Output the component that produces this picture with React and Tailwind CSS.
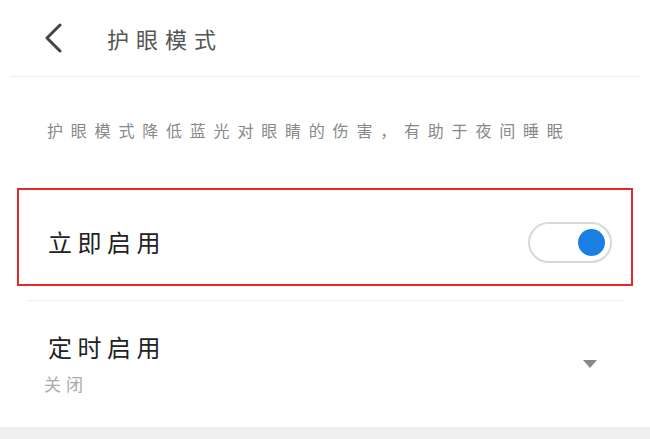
import React from "react";

export default function App() {
  const font = { fontFamily: '"Noto Sans CJK SC", "Noto Sans", sans-serif' };
  return (
    <div className="w-[650px] h-[439px] bg-white flex flex-col overflow-hidden" style={font}>
      {/* Header */}
      <div className="h-[76px] flex items-center pl-[43px]">
        <svg width="20" height="30" viewBox="0 0 20 30" className="shrink-0">
          <path d="M17 2 L4 15 L17 28" fill="none" stroke="#444" strokeWidth="3" strokeLinecap="round" strokeLinejoin="round" />
        </svg>
        <span className="ml-[44px] text-[22px] leading-none tracking-[7px] text-[#555]">护眼模式</span>
      </div>
      <div className="mx-[10px] h-px bg-[#ececec]" />

      {/* Description */}
      <div className="h-[111px] pl-[47px] pt-[43px]">
        <p className="text-[16px] leading-[20px] tracking-[7.8px] text-[#888] whitespace-nowrap">
          护眼模式降低蓝光对眼睛的伤害，有助于夜间睡眠
        </p>
      </div>

      {/* Highlighted row */}
      <div className="mx-[17px] h-[98px] border-2 border-[#e02a2a] flex items-center justify-between pl-[29px] pr-[19px] pt-[10px]">
        <span className="text-[24px] leading-none tracking-[5.5px] text-[#222]">立即启用</span>
        <div className="w-[84px] h-[41px] rounded-full border-2 border-[#d8d8d8] flex items-center justify-end pr-[5px]">
          <div className="w-[27px] h-[27px] rounded-full bg-[#1a7fe3]" />
        </div>
      </div>

      <div className="mt-[14px] mx-[27px] h-px bg-[#eeeeee]" />

      {/* Timed row */}
      <div className="h-[126px] flex items-start justify-between pl-[48px] pr-[52px] pt-[32px]">
        <div className="flex flex-col">
          <span className="text-[24px] leading-[28px] tracking-[5.5px] text-[#222]">定时启用</span>
          <span className="mt-[13px] text-[17px] leading-[20px] tracking-[5px] text-[#aaa] -ml-[4px]">关闭</span>
        </div>
        <svg width="16" height="10" viewBox="0 0 16 10" className="mt-[26px]">
          <path d="M1 1 L15 1 L8 9 Z" fill="#888" />
        </svg>
      </div>

      <div className="h-[12px] bg-[#f0f0f0]" />
    </div>
  );
}
